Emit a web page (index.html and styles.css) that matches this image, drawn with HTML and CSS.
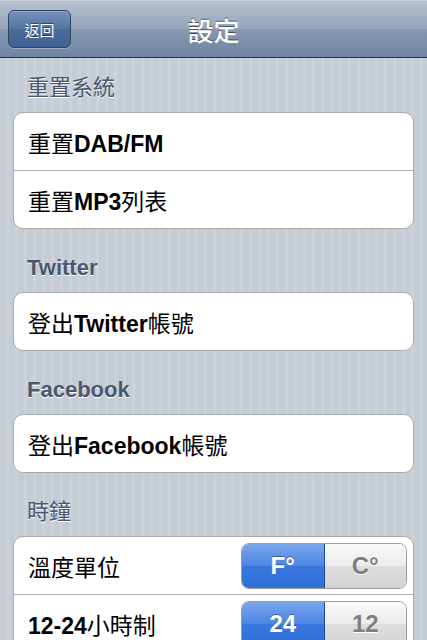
FILE: index.html
```html
<!DOCTYPE html>
<html>
<head>
    <meta charset="utf-8">
    <meta name="viewport" content="width=device-width, initial-scale=1.0">
    <title>設定</title>
    <link rel="stylesheet" href="styles.css">
</head>
<body>
    <div class="navbar">
        <button class="back-btn">返回</button>
        <h1 class="nav-title">設定</h1>
    </div>

    <div class="content">
        <div class="section-title first">重置系統</div>
        <div class="group">
            <div class="row"><span class="row-label">重置<b>DAB/FM</b></span></div>
            <div class="row"><span class="row-label">重置<b>MP3</b>列表</span></div>
        </div>

        <div class="section-title"><b>Twitter</b></div>
        <div class="group">
            <div class="row"><span class="row-label">登出<b>Twitter</b>帳號</span></div>
        </div>

        <div class="section-title"><b>Facebook</b></div>
        <div class="group">
            <div class="row"><span class="row-label">登出<b>Facebook</b>帳號</span></div>
        </div>

        <div class="section-title">時鐘</div>
        <div class="group">
            <div class="row">
                <span class="row-label">溫度單位</span>
                <div class="segmented">
                    <span class="seg active">F°</span>
                    <span class="seg">C°</span>
                </div>
            </div>
            <div class="row">
                <span class="row-label"><b>12-24</b>小時制</span>
                <div class="segmented">
                    <span class="seg active">24</span>
                    <span class="seg">12</span>
                </div>
            </div>
        </div>
    </div>
</body>
</html>
```

FILE: styles.css
```css
body {
    margin: 0;
    padding: 0;
    font-family: 'Liberation Sans', 'Noto Sans CJK TC', sans-serif;
    background: repeating-linear-gradient(90deg, #c5ccd4 0, #c5ccd4 6px, #cbd2d9 6px, #cbd2d9 9px);
    min-height: 100vh;
    overflow: hidden;
}
b {
    font-weight: bold;
}
.navbar {
    height: 58px;
    box-sizing: border-box;
    display: flex;
    align-items: center;
    justify-content: center;
    position: relative;
    background: linear-gradient(to bottom, #b6c1d0 0%, #94a4ba 50%, #8799b1 51%, #6d83a1 100%);
    border-top: 1px solid #c9d2dd;
    border-bottom: 1px solid #2d3642;
}
.back-btn {
    position: absolute;
    left: 8px;
    top: 9px;
    width: 63px;
    height: 38px;
    border: 1px solid #2f4467;
    border-radius: 6px;
    background: linear-gradient(to bottom, #7691bb 0%, #55749f 50%, #4a6a99 51%, #3f6194 100%);
    box-shadow: inset 0 1px 0 rgba(255,255,255,.25), 0 1px 0 rgba(255,255,255,.3);
    color: #fff;
    font-family: 'Noto Sans CJK TC', sans-serif;
    font-size: 15px;
    text-shadow: 0 -1px 0 rgba(0,0,0,.45);
    padding: 0;
}
.nav-title {
    margin: 0;
    color: #fff;
    font-family: 'Noto Sans CJK TC', sans-serif;
    font-size: 26px;
    font-weight: 500;
    text-shadow: 0 -1px 0 rgba(0,0,0,.5);
}
.content {
    padding: 0 13px;
}
.section-title {
    height: 24px;
    line-height: 24px;
    margin: 27px 0 12px;
    padding-left: 14px;
    font-size: 22px;
    color: #4c566c;
    text-shadow: 0 1px 0 #fff;
}
.section-title.first {
    margin-top: 18px;
}
.group {
    background: #fff;
    border: 1px solid #a9abae;
    border-radius: 10px;
    overflow: hidden;
}
.row {
    height: 57px;
    display: flex;
    align-items: center;
    justify-content: space-between;
    padding: 0 6px 0 14px;
    font-size: 23px;
    color: #000;
    border-top: 1px solid #acafb3;
}
.row:first-child {
    border-top: none;
}
.segmented {
    display: flex;
    width: 166px;
    height: 46px;
    border: 1px solid #9a9ea4;
    border-radius: 8px;
    overflow: hidden;
    box-sizing: border-box;
}
.seg {
    flex: 1;
    display: flex;
    align-items: center;
    justify-content: center;
    font-size: 24px;
    font-weight: bold;
    color: #7f7f7f;
    text-shadow: 0 1px 0 #fff;
    background: linear-gradient(to bottom, #fafafa 0%, #ebebeb 50%, #dedede 51%, #d2d2d2 100%);
}
.seg.active {
    color: #fff;
    text-shadow: 0 -1px 0 rgba(0,0,0,.35);
    background: linear-gradient(to bottom, #7aa5ec 0%, #4c85e2 50%, #3a77dc 51%, #2f6fd9 100%);
    border-right: 1px solid #1e4a9a;
}
```
